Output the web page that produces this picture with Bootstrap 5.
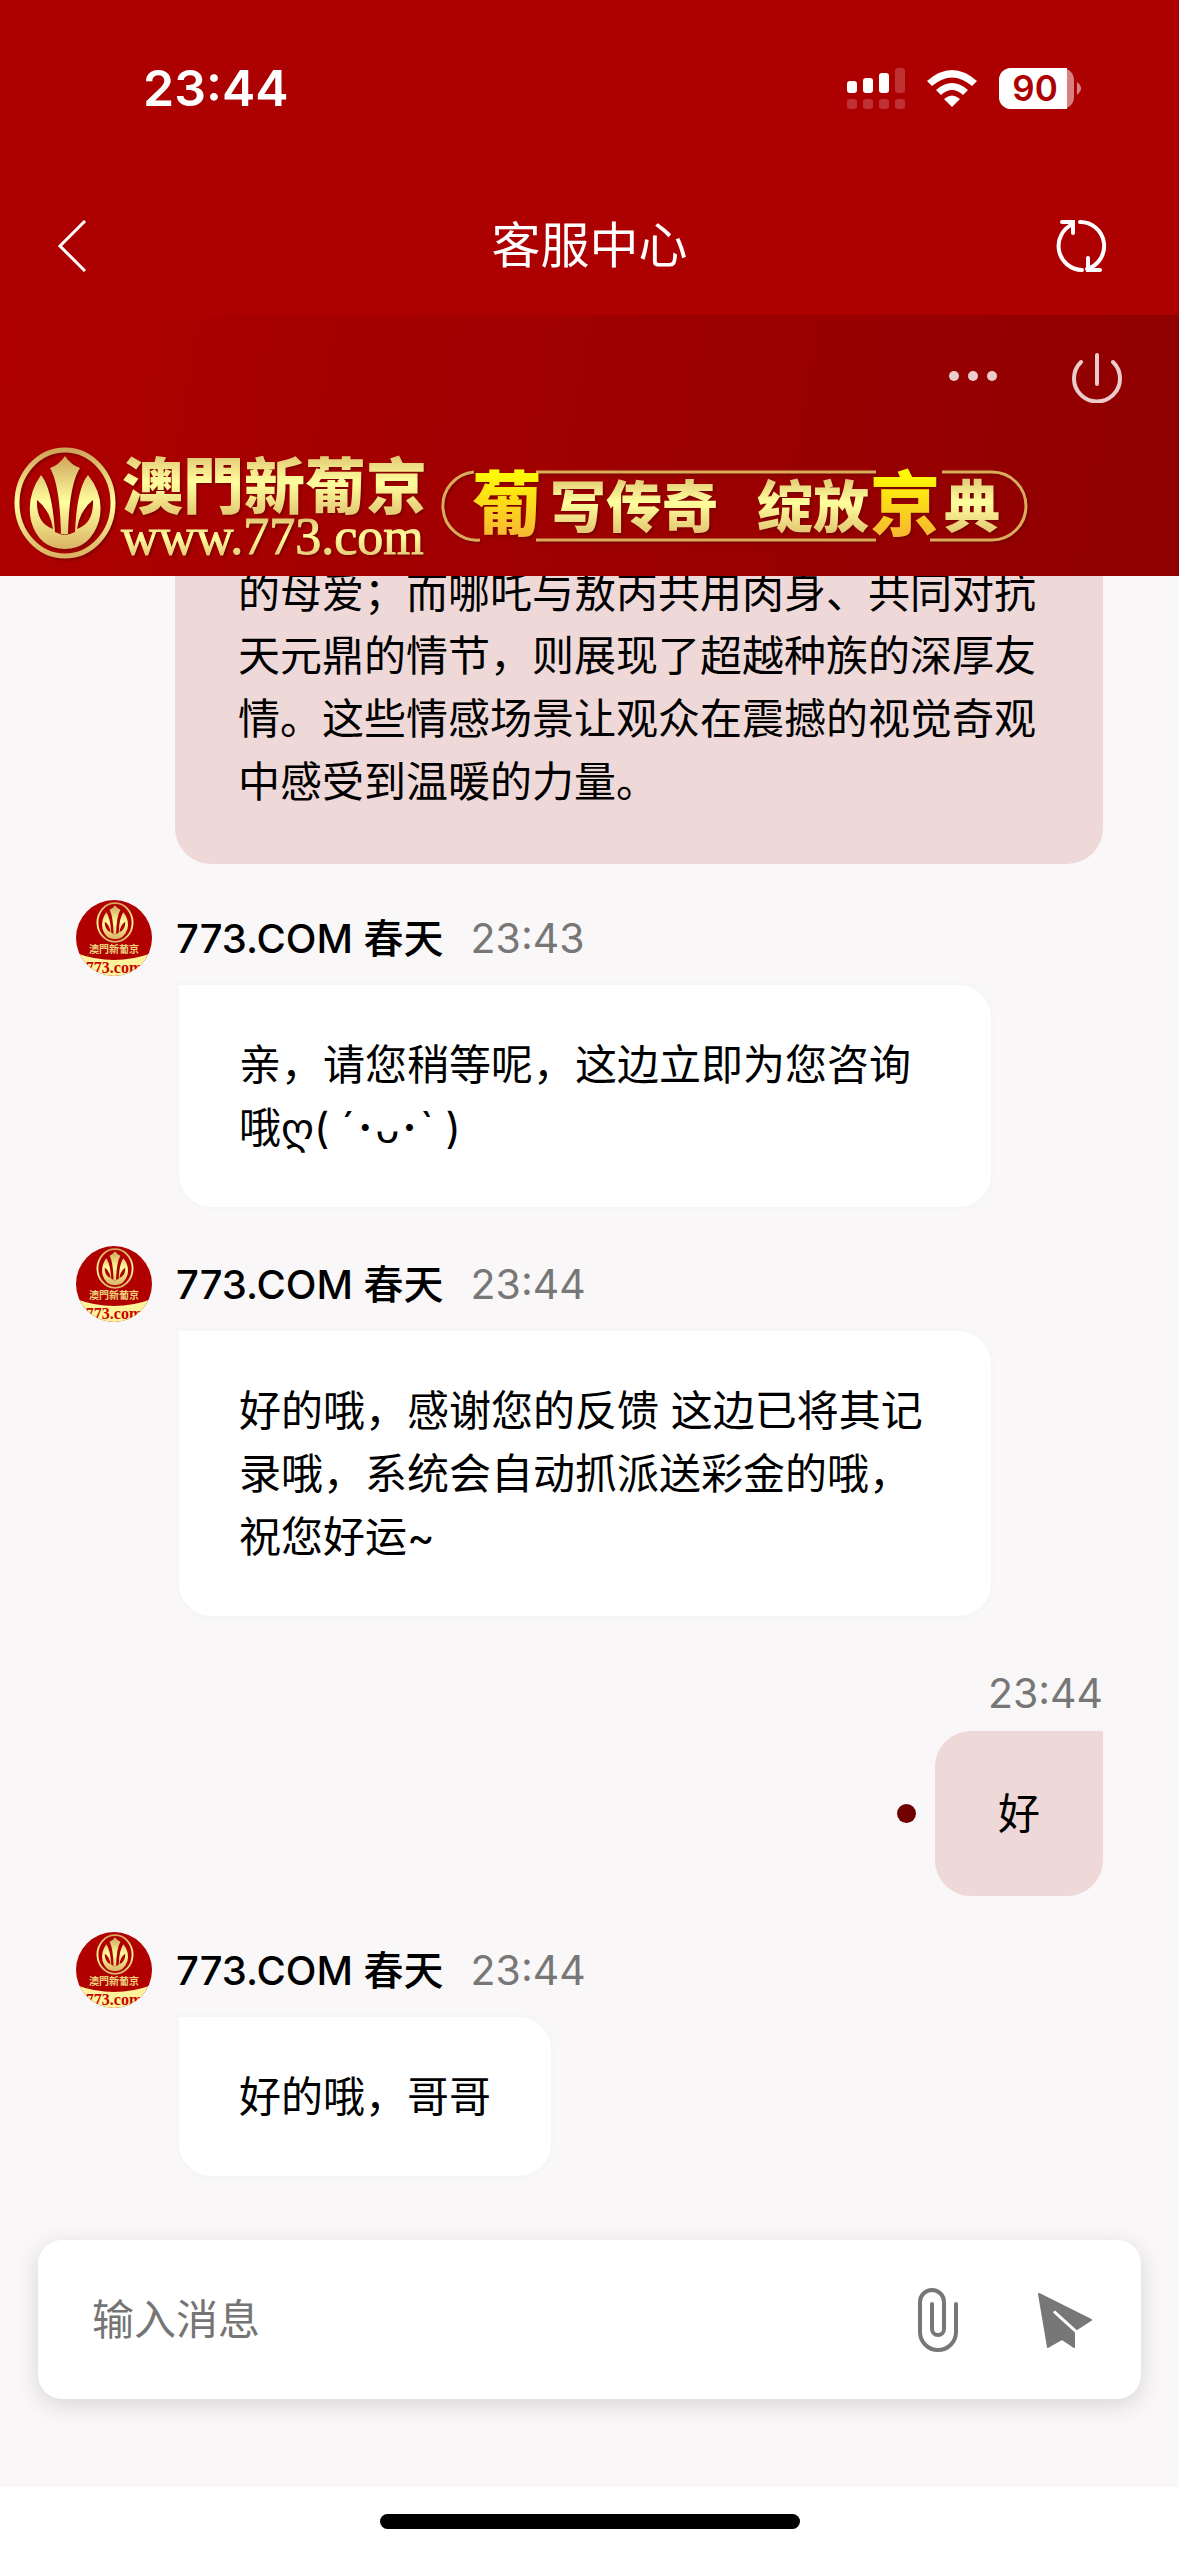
<!DOCTYPE html>
<html lang="zh-CN">
<head>
<meta charset="utf-8">
<meta name="viewport" content="width=device-width, initial-scale=1">
<title>客服中心</title>
<link href="https://cdn.jsdelivr.net/npm/bootstrap@5.3.0/dist/css/bootstrap.min.css" rel="stylesheet">
<style>
body{font-family:Inter,"Noto Sans CJK SC",sans-serif;font-size:42px;line-height:63px;color:#000;background:#f9f7f8;min-height:100vh}
svg{display:block;flex:none}
.top-red{background:#ad0000;color:#fff}
.status{height:177px;padding:0 96px 0 143px}
.clock{font-size:50px;font-weight:600}
.status-icons{gap:21px}
.titlebar{height:138px;padding:0 66px 0 50px}
.titlebar h1{font-size:49px;line-height:72px;font-weight:400}
.tool{border:0;background:none;padding:6px}
.back{width:80px}
.brandbar{background:linear-gradient(100deg,#ae0000 0%,#9e0000 50%,#8f0000 100%);height:261px}
.brand-tools{gap:62px;padding:32px 51px 0 0;color:#ebcccc}
.brand-tools .tool{color:inherit}
.brand-svg{width:1040px;height:130px}
.log{overflow:hidden;gap:36px;padding:0 76px}
.bubble{border:3px solid #f6f6f6;border-radius:36px;padding:48px 60px;background:#fff}
.theirs{margin-left:100px;max-width:818px;border-top-left-radius:0}
.mine{background:#efd8d8;border-color:#efd8d8;border-top-right-radius:0}
.long{max-width:928px;margin-top:-15px;padding-top:0;border-top:0;border-top-left-radius:0}
.meta{height:76px;margin-bottom:6px;gap:27px}
.mine-meta{height:76px}
.who{font-weight:500;font-size:40px}
.when{color:#777;font-size:41px}
.unread{width:19px;height:19px;background:#700000;margin-right:19px}
.compose{margin:60px 38px 88px;background:#fff;border-radius:24px;height:159px;padding:0 41px 0 54px;box-shadow:0 6px 24px rgba(0,0,0,.14)}
.compose input{border:0;background:none;padding:0;font-size:42px;line-height:63px;min-width:0}
.compose input::placeholder{color:#757575}
.compose-tools{gap:64px}
.homebar{height:69px;background:#fff}
.homebar span{width:420px;height:15px;border-radius:8px;background:#000}
</style>
<script src="https://cdn.jsdelivr.net/npm/bootstrap@5.3.0/dist/js/bootstrap.bundle.min.js"></script>
</head>
<body class="d-flex flex-column">
<svg width="0" height="0" class="position-absolute" aria-hidden="true">
  <defs>
    <linearGradient id="gold" x1="0" y1="0" x2="0" y2="1"><stop offset="0" stop-color="#cfa55a"/><stop offset=".5" stop-color="#ffff9e"/><stop offset="1" stop-color="#d9b364"/></linearGradient>
    <linearGradient id="sun" x1="0" y1="0" x2="0" y2="1"><stop offset=".2" stop-color="#ffff00"/><stop offset="1" stop-color="#f5a83c"/></linearGradient>
    <symbol id="emblem" viewBox="0 0 102 112">
      <ellipse cx="51" cy="56" rx="48" ry="53" fill="none" stroke="url(#gold)" stroke-width="5"/>
      <path fill="url(#gold)" fill-rule="evenodd" d="M51 9Q57 18 66 21Q55 38 54 88H47Q46 38 36 21Q45 18 51 9ZM27 28Q38 41 41 85Q51 90 61 85Q63 41 74 28Q91 49 85 74Q76 102 51 102Q25 102 17 74Q12 49 27 28ZM23 53Q22 76 39 82Q36 63 23 53ZM79 53Q66 63 63 82Q80 76 79 53Z"/>
    </symbol>
    <symbol id="avatar" viewBox="0 0 76 76">
      <clipPath id="disc"><circle cx="38" cy="38" r="38"/></clipPath>
      <g clip-path="url(#disc)">
        <rect width="76" height="76" fill="#b00000"/>
        <path d="M0 53Q38 67 76 53V76H0Z" fill="#fdf39a"/>
        <use href="#emblem" x="20" y="2" width="38" height="41"/>
        <text x="38" y="53" text-anchor="middle" font-family="'Noto Sans CJK TC',sans-serif" font-weight="700" font-size="10" fill="#edd27c">澳門新葡京</text>
        <text x="38" y="73" text-anchor="middle" font-family="'Liberation Serif',serif" font-weight="700" font-size="16" fill="#c80000">773.com</text>
      </g>
    </symbol>
  </defs>
</svg>

<header class="top-red">
  <div class="status d-flex align-items-center justify-content-between">
    <span class="clock">23:44</span>
    <div class="status-icons d-flex align-items-center">
      <svg width="58" height="42" fill="#fff"><rect y="13" width="10" height="12" rx="3"/><rect x="16" y="10" width="10" height="15" rx="3"/><rect x="32" y="5" width="10" height="20" rx="3"/><g opacity=".2"><rect x="48" width="10" height="25" rx="3"/><rect y="31" width="10" height="10" rx="3"/><rect x="16" y="31" width="10" height="10" rx="3"/><rect x="32" y="31" width="10" height="10" rx="3"/><rect x="48" y="31" width="10" height="10" rx="3"/></g></svg>
      <svg width="52" height="42" fill="#fff"><path d="M1 13Q26-9 51 13L46 18Q26 1 6 18ZM10 22Q26 8 42 22L37 27Q26 17 15 27ZM18 31Q26 24 34 31L26 39Z"/></svg>
      <svg width="84" height="42"><rect width="75" height="41" rx="12" fill="#fff" opacity=".5"/><path d="M12 0H68V41H12A12 12 0 0 1 0 29V12A12 12 0 0 1 12 0Z" fill="#fff"/><path d="M78 14Q86 20 78 27Z" fill="#fff" opacity=".5"/><text x="36" y="33" text-anchor="middle" font-size="35" font-weight="600" fill="#ad0000">90</text></svg>
    </div>
  </div>
  <div class="titlebar d-flex align-items-center">
    <button class="tool back" aria-label="返回"><svg width="36" height="52" fill="none" stroke="#fff" stroke-width="3"><path d="M29 1L4 26L29 51"/></svg></button>
    <h1 class="m-0 flex-grow-1 text-center">客服中心</h1>
    <button class="tool" aria-label="刷新"><svg width="52" height="52" fill="none" stroke="#fff" stroke-width="4" stroke-linecap="round"><path d="M25 2A24 24 0 0 1 32 49M27 50A24 24 0 0 1 18 4M7 2H18V13M45 50H33V38"/></svg></button>
  </div>
</header>

<section class="brandbar d-flex flex-column justify-content-between overflow-hidden">
  <div class="brand-tools d-flex justify-content-end align-items-center">
    <button class="tool" aria-label="更多"><svg width="50" height="50" fill="currentColor"><circle cx="6" cy="23" r="5"/><circle cx="25" cy="23" r="5"/><circle cx="44" cy="23" r="5"/></svg></button>
    <button class="tool" aria-label="结束会话"><svg width="50" height="50" fill="none" stroke="currentColor" stroke-width="4" stroke-linecap="round"><path d="M25 2V31M9 9A23 23 0 1 0 41 9"/></svg></button>
  </div>
  <svg class="brand-svg" viewBox="0 -4 1040 130" role="img" aria-label="澳門新葡京 www.773.com">
    <g style="filter:drop-shadow(2px 2px 1px #6008)">
    <use href="#emblem" x="14" y="-3" width="102" height="112"/>
    <text x="122" y="59" font-family="'Noto Sans CJK TC',sans-serif" font-weight="900" font-size="61" fill="url(#gold)">澳門新葡京</text>
    <text x="121" y="104" font-family="'Liberation Serif',serif" font-size="52" fill="url(#gold)" stroke="url(#gold)">www.773.com</text>
    <path d="M474 22A34 34 0 0 0 480 90M536 22H876M536 90H876M942 22H992A34 34 0 0 1 992 90H930" fill="none" stroke="#d9ac5c" stroke-width="3"/>
    <g font-family="'Noto Sans CJK SC',sans-serif" font-weight="900" fill="url(#gold)" font-size="56">
      <text x="550" y="77">写传奇</text><text x="757" y="77">绽放</text><text x="944" y="77">典</text>
      <text x="472" y="80" font-size="70" fill="url(#sun)">葡</text><text x="870" y="80" font-size="70" fill="url(#sun)">京</text>
    </g>
    </g>
  </svg>
</section>

<main class="log d-flex flex-column flex-grow-1">
  <div class="bubble mine long align-self-end">的母爱；而哪吒与敖丙共用肉身、共同对抗天元鼎的情节，则展现了超越种族的深厚友情。这些情感场景让观众在震撼的视觉奇观中感受到温暖的力量。</div>

  <article class="d-flex flex-column">
    <div class="meta d-flex align-items-center"><div class="d-flex align-items-center gap-4"><svg width="76" height="76"><use href="#avatar"/></svg><span class="who">773.COM 春天</span></div><span class="when">23:43</span></div>
    <div class="bubble theirs align-self-start">亲，请您稍等呢，这边立即为您咨询哦ღ( ´･ᴗ･` )</div>
  </article>

  <article class="d-flex flex-column">
    <div class="meta d-flex align-items-center"><div class="d-flex align-items-center gap-4"><svg width="76" height="76"><use href="#avatar"/></svg><span class="who">773.COM 春天</span></div><span class="when">23:44</span></div>
    <div class="bubble theirs align-self-start">好的哦，感谢您的反馈 这边已将其记录哦，系统会自动抓派送彩金的哦，祝您好运~</div>
  </article>

  <article class="d-flex flex-column align-items-end">
    <div class="mine-meta d-flex align-items-center"><span class="when">23:44</span></div>
    <div class="d-flex align-items-center"><span class="unread rounded-circle"></span><div class="bubble mine">好</div></div>
  </article>

  <article class="d-flex flex-column">
    <div class="meta d-flex align-items-center"><div class="d-flex align-items-center gap-4"><svg width="76" height="76"><use href="#avatar"/></svg><span class="who">773.COM 春天</span></div><span class="when">23:44</span></div>
    <div class="bubble theirs align-self-start">好的哦，哥哥</div>
  </article>
</main>

<form class="compose d-flex align-items-center">
  <input class="flex-grow-1" type="text" placeholder="输入消息" aria-label="输入消息">
  <div class="compose-tools d-flex align-items-center">
    <button class="tool" type="button" aria-label="附件"><svg width="44" height="66" fill="none" stroke="#777" stroke-width="4" stroke-linecap="round"><path d="M40 17V45A18 18 0 0 1 4 45V15A12 12 0 0 1 28 15V42A6 6 0 0 1 16 42V17"/></svg></button>
    <button class="tool" type="button" aria-label="发送"><svg width="58" height="58" fill="#777" stroke="#777" stroke-width="2" stroke-linejoin="round"><path d="M3 3L55 29L41 38L20 19Q17 18 16 22L38 42V56L26 48L12 56Z"/></svg></button>
  </div>
</form>
<footer class="homebar d-flex justify-content-center align-items-center"><span></span></footer>
</body>
</html>
